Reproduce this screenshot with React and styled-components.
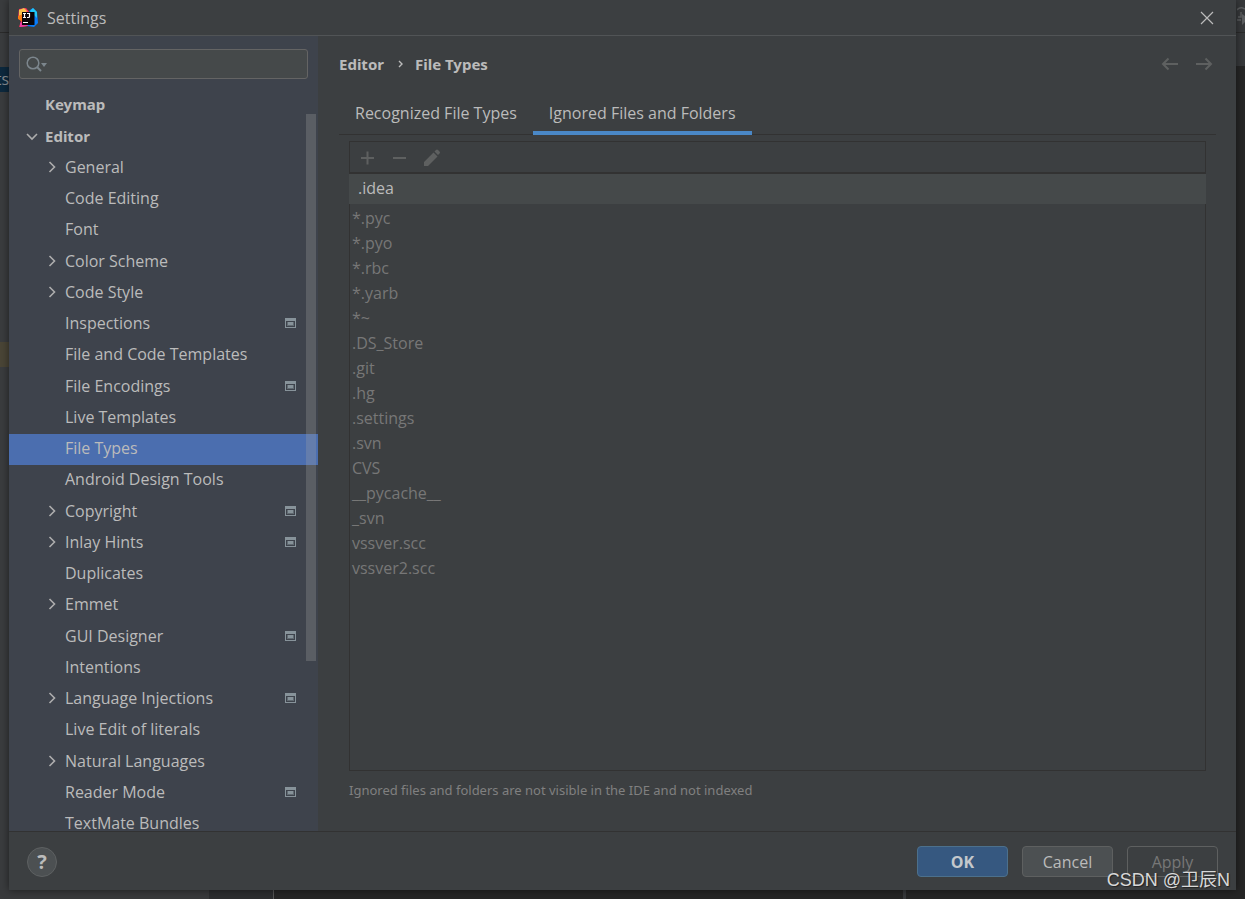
import React from "react";
import styled, { createGlobalStyle } from "styled-components";

const boldFont = `"Noto Sans", sans-serif`;

const GlobalStyle = createGlobalStyle`
  * {
    box-sizing: border-box;
  }

  body {
    margin: 0;
    background: #3c3f41;
    color: #bbbbbb;
    font-family: "Open Sans", "Noto Sans CJK SC", sans-serif;
    font-size: 16px;
  }

  button,
  input {
    font: inherit;
    color: inherit;
  }

  ul {
    list-style: none;
    margin: 0;
    padding: 0;
  }
`;

/* ===============================
 * IDE window behind the dialog
 * =============================== */

const Desktop = styled.div`
  position: relative;
  display: flex;
  min-height: 100vh;
  padding: 0 9px 9px;
  overflow: hidden;
  background: #313335;
`;

const Backdrop = styled.div`
  position: absolute;
  inset: 0;
`;

const Piece = styled.div`
  position: absolute;
  top: ${({ $top }) => $top};
  right: ${({ $right }) => $right};
  bottom: ${({ $bottom }) => $bottom};
  left: ${({ $left }) => $left};
  width: ${({ $width }) => $width};
  height: ${({ $height }) => $height};
  display: flex;
  justify-content: flex-end;
  background: ${({ $color }) => $color};
  color: #8a8f93;
  line-height: 25px;
  overflow: hidden;
`;

/* ===============================
 * Dialog frame
 * =============================== */

const Dialog = styled.main`
  position: relative;
  flex: 1;
  min-width: 0;
  display: flex;
  flex-direction: column;
  background: #3c3f41;
  box-shadow: 0 0 8px rgba(0, 0, 0, 0.5);
`;

const TitleBar = styled.header`
  display: flex;
  align-items: center;
  gap: 9px;
  height: 36px;
  padding: 0 22px 0 9px;
  border-bottom: 1px solid #515456;
`;

const Title = styled.h1`
  flex: 1;
  margin: 0;
  font-size: 16px;
  font-weight: 400;
`;

const IconButton = styled.button`
  display: flex;
  padding: 0;
  border: 0;
  background: none;
  color: ${({ $color }) => $color || "#5e6060"};
`;

const Body = styled.div`
  flex: 1 1 0;
  min-height: 0;
  display: flex;
`;

/* ===============================
 * Sidebar
 * =============================== */

const Sidebar = styled.nav`
  position: relative;
  flex: none;
  width: 309px;
  padding-top: 13px;
  overflow: hidden;
  background: #3e434c;
`;

const SearchBox = styled.label`
  display: flex;
  align-items: center;
  height: 30px;
  margin: 0 10px 11px;
  padding-left: 6px;
  border: 1px solid #646464;
  border-radius: 3px;
  background: #45494a;
`;

const SearchInput = styled.input`
  flex: 1;
  min-width: 0;
  border: 0;
  outline: 0;
  background: none;
`;

const Tree = styled.ul`
  display: grid;
  grid-auto-rows: 31px 32px 31px 31px;
`;

const TreeRow = styled.li`
  display: flex;
  align-items: center;
  padding: 0 22px 3px ${({ $level }) => ($level === 0 ? 17 : 37)}px;
  background: ${({ $selected }) => ($selected ? "#4b6eaf" : "transparent")};
  ${({ $level }) => $level === 0 && `font: 700 15px ${boldFont};`}
`;

const Chevron = styled.span`
  display: flex;
  width: 19px;
`;

const TreeLabel = styled.a`
  flex: 1;
  color: inherit;
  text-decoration: none;
  white-space: nowrap;
`;

const Thumb = styled.div`
  position: absolute;
  top: 78px;
  right: 2px;
  width: 10px;
  height: 547px;
  background: rgba(166, 166, 166, 0.28);
`;

/* ===============================
 * Content
 * =============================== */

const Content = styled.section`
  flex: 1;
  min-width: 0;
  display: flex;
  flex-direction: column;
  padding: 0 20px 0 21px;
`;

const Crumbs = styled.div`
  display: flex;
  align-items: center;
  height: 56px;
  padding-right: 3px;
  font: 700 15px ${boldFont};
`;

const CrumbArrow = styled.svg`
  margin: 0 12px 0 14px;
`;

const History = styled.div`
  display: flex;
  gap: 18px;
  margin-left: auto;
`;

const Tabs = styled.div`
  display: flex;
  height: 43px;
  border-bottom: 1px solid #323232;
`;

const Tab = styled.button`
  height: 43px;
  padding: 2px 16px 0;
  border: 0;
  border-bottom: 4px solid ${({ $active }) => ($active ? "#4a88c7" : "transparent")};
  background: none;
`;

const ListPanel = styled.div`
  flex: 1;
  display: flex;
  flex-direction: column;
  margin: 6px 10px 0;
  border: 1px solid #323232;
`;

const Toolbar = styled.div`
  display: flex;
  align-items: center;
  gap: 14px;
  height: 32px;
  padding: 1px 0 0 8px;
  border-bottom: 2px solid #323232;
`;

const EditField = styled.input`
  height: 30px;
  margin: 0 -1px 2px;
  padding: 0 9px 2px;
  border: 0;
  border-radius: 0;
  outline: 0;
  background: #45494a;
`;

const Pattern = styled.li`
  height: 25px;
  padding-left: 2px;
  line-height: 24px;
  color: #777777;
`;

const Hint = styled.p`
  margin: 10px 10px 31px;
  font: 13px/19px ${boldFont};
  color: #808080;
`;

/* ===============================
 * Footer
 * =============================== */

const Footer = styled.footer`
  display: flex;
  align-items: center;
  gap: 14px;
  height: 59px;
  padding: 1px 18px 0;
  border-top: 1px solid #323232;
`;

const HelpButton = styled.button`
  width: 30px;
  height: 30px;
  margin-right: auto;
  padding: 0;
  border: 1px solid #5e6162;
  border-radius: 50%;
  background: #4c5052;
  font-size: 20px;
  font-weight: 700;
  line-height: 28px;
`;

const buttonLooks = {
  primary: { background: "#365880", border: "#4c708c", color: "#c4c8cc" },
  normal: { background: "#4c5052", border: "#5e6060", color: "#bbbbbb" },
  disabled: { background: "transparent", border: "#5e6060", color: "#777777" },
};

const Button = styled.button`
  width: 91px;
  height: 31px;
  padding: 0;
  border: 1px solid ${({ $look }) => buttonLooks[$look].border};
  border-radius: 4px;
  background: ${({ $look }) => buttonLooks[$look].background};
  color: ${({ $look }) => buttonLooks[$look].color};
  font-weight: ${({ $look }) => ($look === "primary" ? 700 : 400)};
`;

const Watermark = styled.div`
  position: absolute;
  right: 15px;
  bottom: 5px;
  color: #d8d8d8;
  font-family: "Liberation Sans", "Noto Sans CJK SC", sans-serif;
  font-size: 18px;
  line-height: 28px;
  text-shadow: 1px 1px 1px #222222;
`;

/* ===============================
 * Icons
 * =============================== */

const Logo = () => (
  <svg width="20" height="20" viewBox="0 0 20 20" aria-hidden="true">
    <path d="M1 1l7-1 4 5-3 13-8 1 2-6-3-3z" fill="#fe315d" />
    <path d="M1 2l5-2 3 3-4 6-4-1z" fill="#f9c14b" />
    <path d="M0 8l5-2v8l-5-3z" fill="#f97a12" />
    <path d="M12 2l3-2 4 4 1 11-4 4-7-1-2-4z" fill="#087cfa" />
    <path d="M12 3l3-3 4 4v6z" fill="#20c8f8" />
    <path d="M2 15l5-2 3 5-8 1z" fill="#e83aa0" />
    <rect x="4" y="4" width="12.500" height="13" fill="#0a0508" />
    <path
      d="M5 5.500h3M6.500 5.500v4M5 9.500h3M9 5.500h2.500v3q0 1-1 1H9M5 14.500h5"
      stroke="#fff"
      strokeWidth="1.200"
      fill="none"
    />
  </svg>
);

const CloseIcon = () => (
  <svg width="14" height="14" viewBox="0 0 14 14">
    <path d="M1 1l12 12M13 1L1 13" stroke="currentColor" strokeWidth="1.200" />
  </svg>
);

const SearchIcon = () => (
  <svg width="22" height="18" viewBox="0 0 22 18" aria-hidden="true">
    <circle cx="7" cy="8" r="5.800" fill="none" stroke="#7c868d" strokeWidth="1.500" />
    <path d="M11 12l4 4" stroke="#7c868d" strokeWidth="2" />
    <path d="M15 8h6l-3 4z" fill="#7c868d" />
  </svg>
);

const ArrowIcon = ({ open }) => (
  <svg width="12" height="12" viewBox="0 0 12 12" aria-hidden="true">
    <path
      d={open ? "M1 4l5 5 5-5" : "M3.500 1l5 5-5 5"}
      fill="none"
      stroke="#adadad"
      strokeWidth="1.600"
    />
  </svg>
);

const ProjectIcon = () => (
  <svg width="11" height="10" viewBox="0 0 11 10" aria-label="For current project">
    <path d="M0 0h11v10H0zM1 3v6h9V3z" fill="#87939a" fillRule="evenodd" />
    <rect x="2" y="4" width="7" height="4" fill="#616b72" />
    <rect x="3" y="4" width="5" height="3" fill="#87939a" />
  </svg>
);

const HistoryIcon = ({ forward }) => (
  <svg width="17" height="14" viewBox="0 0 17 14">
    <path
      d={forward ? "M0 7h15M9.500 1.500L15 7l-5.500 5.500" : "M17 7H2M7.500 1.500L2 7l5.500 5.500"}
      fill="none"
      stroke="currentColor"
      strokeWidth="2"
    />
  </svg>
);

const AddIcon = () => (
  <svg width="18" height="18" viewBox="0 0 18 18">
    <path d="M3 9h13M9.500 2.500v13" stroke="currentColor" strokeWidth="2" />
  </svg>
);

const RemoveIcon = () => (
  <svg width="18" height="18" viewBox="0 0 18 18">
    <path d="M3 9h13" stroke="currentColor" strokeWidth="2" />
  </svg>
);

const EditIcon = () => (
  <svg width="18" height="18" viewBox="0 0 18 18">
    <path
      d="M2 17v-4l9.500-9.500 4 4L6 17zM12.500 2.500l1.500-1.500q1-1 2 0l1.500 1.500q1 1 0 2l-1.500 1.500z"
      fill="currentColor"
    />
  </svg>
);

const ClockIcon = () => (
  <svg width="8" height="26" viewBox="0 0 8 26">
    <path d="M0 10q3-4 8-1M0 20h4M4 12v5H1" fill="none" stroke="#5c5e60" strokeWidth="1.500" />
    <path d="M5 14l3 2v6l-3 3z" fill="#5c5e60" />
  </svg>
);

/* ===============================
 * Data
 * =============================== */

const treeItems = [
  { label: "Keymap", level: 0 },
  { label: "Editor", level: 0, arrow: "open" },
  { label: "General", arrow: "closed" },
  { label: "Code Editing" },
  { label: "Font" },
  { label: "Color Scheme", arrow: "closed" },
  { label: "Code Style", arrow: "closed" },
  { label: "Inspections", project: true },
  { label: "File and Code Templates" },
  { label: "File Encodings", project: true },
  { label: "Live Templates" },
  { label: "File Types", selected: true },
  { label: "Android Design Tools" },
  { label: "Copyright", arrow: "closed", project: true },
  { label: "Inlay Hints", arrow: "closed", project: true },
  { label: "Duplicates" },
  { label: "Emmet", arrow: "closed" },
  { label: "GUI Designer", project: true },
  { label: "Intentions" },
  { label: "Language Injections", arrow: "closed", project: true },
  { label: "Live Edit of literals" },
  { label: "Natural Languages", arrow: "closed" },
  { label: "Reader Mode", project: true },
  { label: "TextMate Bundles" },
];

const patterns = [
  "*.pyc",
  "*.pyo",
  "*.rbc",
  "*.yarb",
  "*~",
  ".DS_Store",
  ".git",
  ".hg",
  ".settings",
  ".svn",
  "CVS",
  "__pycache__",
  "_svn",
  "vssver.scc",
  "vssver2.scc",
];

export default function App() {
  return (
    <Desktop>
      <GlobalStyle />
      <Backdrop aria-hidden="true">
        <Piece $top="0" $left="0" $width="9px" $bottom="0" $color="#3a3c3e" />
        <Piece $top="32px" $left="0" $width="9px" $height="1px" $color="#2b2b2b" />
        <Piece $top="67px" $left="0" $width="9px" $height="25px" $color="#0d293e">
          ts
        </Piece>
        <Piece $top="342px" $left="0" $width="9px" $height="25px" $color="#4a4536" />
        <Piece $top="0" $right="0" $width="9px" $height="66px" $color="#37393b">
          <ClockIcon />
        </Piece>
        <Piece $top="32px" $right="0" $width="9px" $height="1px" $color="#2b2b2b" />
        <Piece $top="66px" $right="0" $width="9px" $bottom="0" $color="#262626" />
        <Piece $left="0" $width="209px" $bottom="0" $height="9px" $color="#38393b" />
        <Piece $left="209px" $width="64px" $bottom="0" $height="9px" $color="#2c2d2f" />
        <Piece $left="273px" $width="1px" $bottom="0" $height="9px" $color="#555555" />
        <Piece $left="274px" $right="0" $bottom="0" $height="9px" $color="#252525" />
        <Piece $right="339px" $width="3px" $bottom="0" $height="9px" $color="#37393b" />
      </Backdrop>

      <Dialog>
        <TitleBar>
          <Logo />
          <Title>Settings</Title>
          <IconButton $color="#bbbbbb" aria-label="Close">
            <CloseIcon />
          </IconButton>
        </TitleBar>

        <Body>
          <Sidebar>
            <SearchBox>
              <SearchIcon />
              <SearchInput type="text" aria-label="Search settings" />
            </SearchBox>
            <Tree>
              {treeItems.map(({ label, level = 1, arrow, selected, project }) => (
                <TreeRow key={label} $level={level} $selected={selected}>
                  <Chevron>{arrow && <ArrowIcon open={arrow === "open"} />}</Chevron>
                  <TreeLabel href="#">{label}</TreeLabel>
                  {project && <ProjectIcon />}
                </TreeRow>
              ))}
            </Tree>
            <Thumb />
          </Sidebar>

          <Content>
            <Crumbs>
              <span>Editor</span>
              <CrumbArrow width="5" height="8" viewBox="0 0 5 8" aria-hidden="true">
                <path d="M1 1l3 3-3 3" fill="none" stroke="#bbbbbb" strokeWidth="1.400" />
              </CrumbArrow>
              <span>File Types</span>
              <History>
                <IconButton aria-label="Back">
                  <HistoryIcon />
                </IconButton>
                <IconButton aria-label="Forward">
                  <HistoryIcon forward />
                </IconButton>
              </History>
            </Crumbs>
            <Tabs role="tablist">
              <Tab role="tab">Recognized File Types</Tab>
              <Tab role="tab" aria-selected="true" $active>
                Ignored Files and Folders
              </Tab>
            </Tabs>
            <ListPanel>
              <Toolbar>
                <IconButton aria-label="Add">
                  <AddIcon />
                </IconButton>
                <IconButton aria-label="Remove">
                  <RemoveIcon />
                </IconButton>
                <IconButton aria-label="Edit">
                  <EditIcon />
                </IconButton>
              </Toolbar>
              <EditField type="text" defaultValue=".idea" aria-label="Pattern" />
              <ul>
                {patterns.map((pattern) => (
                  <Pattern key={pattern}>{pattern}</Pattern>
                ))}
              </ul>
            </ListPanel>
            <Hint>Ignored files and folders are not visible in the IDE and not indexed</Hint>
          </Content>
        </Body>

        <Footer>
          <HelpButton aria-label="Help">?</HelpButton>
          <Button $look="primary">OK</Button>
          <Button $look="normal">Cancel</Button>
          <Button $look="disabled" disabled>
            Apply
          </Button>
        </Footer>
      </Dialog>

      <Watermark>CSDN @卫辰N</Watermark>
    </Desktop>
  );
}
